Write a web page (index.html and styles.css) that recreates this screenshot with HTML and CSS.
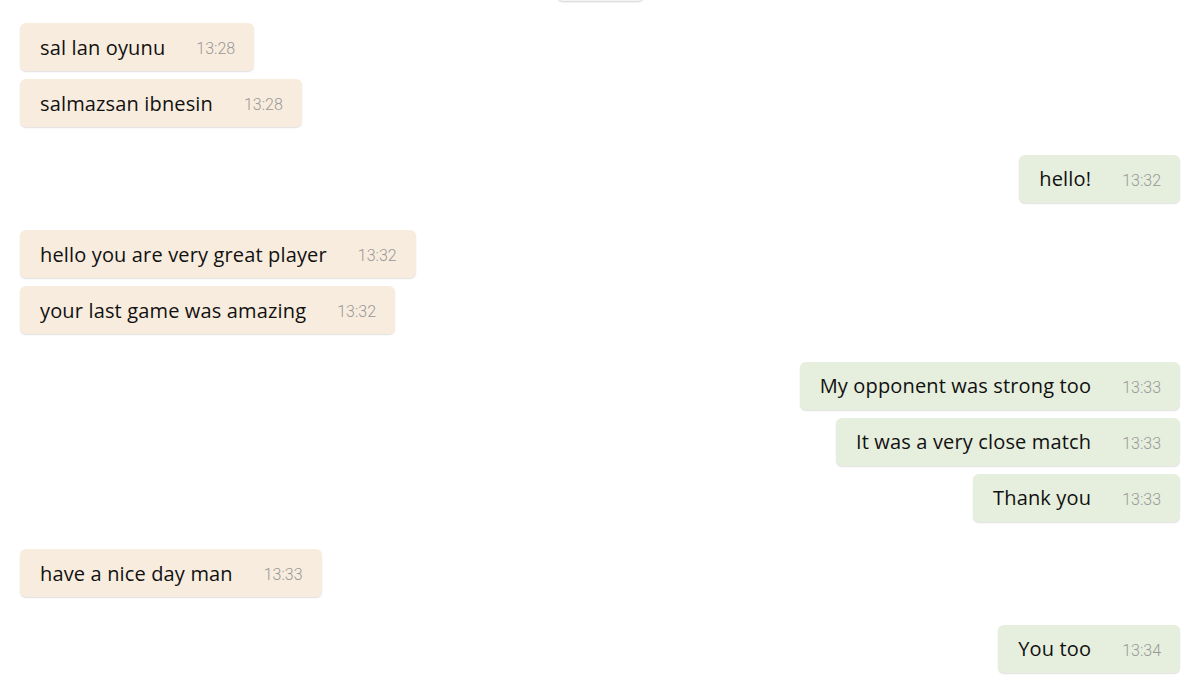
FILE: index.html
```html
<!DOCTYPE html>
<html>
<head>
<meta charset="utf-8">
<link rel="stylesheet" href="styles.css">
</head>
<body>
<div class="chat">
  <div class="date-pill"></div>
  <div class="group in">
    <div class="bubble"><span class="text">sal lan oyunu</span><span class="time">13:28</span></div>
    <div class="bubble"><span class="text">salmazsan ibnesin</span><span class="time">13:28</span></div>
  </div>
  <div class="group out">
    <div class="bubble"><span class="text">hello!</span><span class="time">13:32</span></div>
  </div>
  <div class="group in">
    <div class="bubble"><span class="text">hello you are very great player</span><span class="time">13:32</span></div>
    <div class="bubble"><span class="text">your last game was amazing</span><span class="time">13:32</span></div>
  </div>
  <div class="group out">
    <div class="bubble"><span class="text">My opponent was strong too</span><span class="time">13:33</span></div>
    <div class="bubble"><span class="text">It was a very close match</span><span class="time">13:33</span></div>
    <div class="bubble"><span class="text">Thank you</span><span class="time">13:33</span></div>
  </div>
  <div class="group in">
    <div class="bubble"><span class="text">have a nice day man</span><span class="time">13:33</span></div>
  </div>
  <div class="group out">
    <div class="bubble"><span class="text">You too</span><span class="time">13:34</span></div>
  </div>
</div>
</body>
</html>
```

FILE: styles.css
```css
html, body {
  margin: 0;
  padding: 0;
  background: #ffffff;
}

body {
  font-family: "Open Sans", "Noto Sans", sans-serif;
  overflow: hidden;
}

.chat {
  display: flex;
  flex-direction: column;
  padding: 0 20px;
}

.date-pill {
  align-self: center;
  width: 87px;
  height: 29px;
  margin-top: -28px;
  margin-bottom: 22px;
  background: #f4f4f4;
  border-radius: 6px;
  box-shadow: 0 1px 2px rgba(0, 0, 0, 0.18);
}

.group {
  display: flex;
  flex-direction: column;
  gap: 8px;
  margin-bottom: 27.6px;
}

.group.in {
  align-items: flex-start;
}

.group.out {
  align-items: flex-end;
}

.bubble {
  display: flex;
  align-items: center;
  height: 48px;
  box-sizing: border-box;
  padding: 0 19px 0 20px;
  border-radius: 6px;
  box-shadow: 0 1px 1.5px rgba(0, 0, 0, 0.13);
}

.in .bubble {
  background: #f8ecde;
}

.out .bubble {
  background: #e6eedd;
}

.text {
  font-size: 20px;
  color: #111111;
  letter-spacing: 0.15px;
}

.time {
  font-family: Roboto, sans-serif;
  font-weight: 300;
  font-size: 16px;
  color: #999999;
  margin-left: 31px;
  padding-top: 3px;
}
```
